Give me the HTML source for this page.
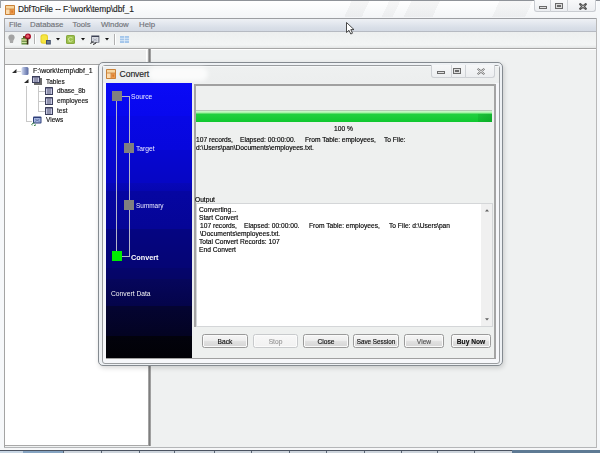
<!DOCTYPE html>
<html><head><meta charset="utf-8"><style>
html,body{margin:0;padding:0;width:600px;height:453px;overflow:hidden;background:#eef0f0;}
body{position:relative;font-family:"Liberation Sans",sans-serif;}
body>div,body>svg{position:absolute;}
.t{white-space:pre;-webkit-text-stroke:0.15px currentColor;}
</style></head><body>
<div style="left:0px;top:0px;width:600px;height:453px;background:#eff1f1;"></div>
<div style="left:0px;top:0px;width:600px;height:18px;background:linear-gradient(#ffffff,#f3f5f7);"></div>
<div style="left:0px;top:0px;width:4px;height:453px;background:#f6f8fa;"></div>
<div style="left:597px;top:0px;width:3px;height:453px;background:#f6f8fa;"></div>
<div style="left:0px;top:0px;width:600px;height:1px;background:#8e9298;"></div>
<div style="left:0px;top:0px;width:1px;height:8px;background:#9aa0a6;"></div>
<div style="left:345px;top:1px;width:200px;height:16px;background:linear-gradient(115deg,transparent 0,transparent 6px,rgba(0,0,0,0.035) 6px,rgba(0,0,0,0.035) 22px,transparent 22px,transparent 40px,rgba(0,0,0,0.03) 40px,rgba(0,0,0,0.03) 50px,transparent 50px,transparent 60px,rgba(0,0,0,0.035) 60px,rgba(0,0,0,0.035) 86px,transparent 86px,transparent 140px,rgba(0,0,0,0.03) 140px,rgba(0,0,0,0.03) 170px,transparent 170px);"></div>
<svg style="left:4.5px;top:4.5px;width:10px;height:10px" viewBox="0 0 10 10"><rect x="0" y="0" width="10" height="10" rx="0.8" fill="#c9823a"/><rect x="1" y="1" width="8" height="2.6" fill="#f7d6a0"/><rect x="1" y="4.4" width="3.6" height="4.6" fill="#fcdcae"/><rect x="5.4" y="4.4" width="3.6" height="4.6" fill="#ef9c4c"/><rect x="6.3" y="5.5" width="1.8" height="2.2" fill="#d87a2c"/></svg>
<div class="t" style="left:18px;top:4.43px;font-size:8.4px;line-height:10.92px;color:#1e1e1e;font-weight:normal;letter-spacing:-0.05px;-webkit-text-stroke:0.15px #1e1e1e;">DbfToFile -- F:\work\temp\dbf_1</div>
<div style="left:534px;top:0;width:62px;height:12px;border:1px solid #c9ccd1;border-top:none;border-radius:0 0 3px 3px;background:linear-gradient(#f8f9fa,#eceef1);box-sizing:border-box"></div>
<div style="left:550px;top:0px;width:1px;height:12px;background:#cfd2d6;"></div>
<div style="left:567px;top:0px;width:1px;height:12px;background:#cfd2d6;"></div>
<div style="left:539px;top:6px;width:8px;height:3px;border:1px solid #6a6a6a;box-sizing:border-box;background:#e0e0e0;"></div>
<div style="left:555px;top:3px;width:8px;height:6px;border:1px solid #6a6a6a;box-sizing:border-box;background:#ddd;"></div>
<div style="left:557px;top:5px;width:4px;height:2px;border:1px solid #6a6a6a;box-sizing:border-box;"></div>
<svg style="left:578.5px;top:3px;width:8px;height:7px" viewBox="0 0 8 7"><path d="M0.5 1.2 L1.3 0.5 L4 2.6 L6.7 0.5 L7.5 1.2 L5.3 3.5 L7.5 5.8 L6.7 6.5 L4 4.4 L1.3 6.5 L0.5 5.8 L2.7 3.5 Z" fill="#f4f4f4" stroke="#555" stroke-width="1.1"/></svg>
<div style="left:4px;top:18px;width:593px;height:14px;background:linear-gradient(#eef1f5 0,#e4e8ef 35%,#d8dee7 75%,#d4dae4 100%);border-top:1px solid #9c9ea2;border-bottom:1px solid #b6bac2;box-sizing:border-box;"></div>
<div class="t" style="left:9px;top:19.83px;font-size:7.8px;line-height:10.14px;color:#707378;font-weight:normal;">File</div>
<div class="t" style="left:30px;top:19.83px;font-size:7.8px;line-height:10.14px;color:#707378;font-weight:normal;">Database</div>
<div class="t" style="left:72.5px;top:19.83px;font-size:7.8px;line-height:10.14px;color:#707378;font-weight:normal;">Tools</div>
<div class="t" style="left:101px;top:19.83px;font-size:7.8px;line-height:10.14px;color:#707378;font-weight:normal;">Window</div>
<div class="t" style="left:139px;top:19.83px;font-size:7.8px;line-height:10.14px;color:#707378;font-weight:normal;">Help</div>
<div style="left:4px;top:32px;width:593px;height:17px;background:linear-gradient(#edefef,#f3f5f5 80%,#e4e6e6);border-bottom:1px solid #a6a6a6;box-sizing:border-box;"></div>
<div style="left:4px;top:49px;width:593px;height:1px;background:#ffffff;"></div>
<div style="left:4px;top:18px;width:1px;height:32px;background:#a8a8a8;"></div>
<svg style="left:8px;top:34px;width:7px;height:9px" viewBox="0 0 7 9"><circle cx="3.5" cy="3.5" r="3.1" fill="#a2a2a2"/><path d="M1.5 5.5 H5.5 L5 9 H2Z" fill="#a8a8a8"/></svg>
<svg style="left:21px;top:33px;width:11px;height:12px" viewBox="0 0 11 12"><rect x="0.5" y="5" width="6" height="6.5" fill="#5f8a3a"/><rect x="0.5" y="6.3" width="6" height="1.3" fill="#e8e2a0"/><rect x="0.5" y="8.8" width="6" height="1.3" fill="#cfe0a0"/><rect x="2" y="3" width="3" height="2" fill="#6a4a20"/><circle cx="7" cy="3.5" r="3" fill="#a8102a"/><circle cx="6.8" cy="3.2" r="1.6" fill="#e85a6a"/><rect x="5.8" y="5.5" width="1.6" height="6" fill="#3a2a10"/></svg>
<div style="left:34px;top:34px;width:1px;height:10px;background:#b0b0b0;"></div>
<div style="left:35px;top:34px;width:1px;height:10px;background:#ffffff;"></div>
<svg style="left:40px;top:34px;width:11px;height:11px" viewBox="0 0 11 11"><rect x="0.5" y="0.3" width="7.5" height="9.5" rx="2.5" fill="#e6cf2a"/><rect x="1.5" y="1.3" width="5.5" height="7.5" rx="2" fill="#f6e640"/><rect x="6" y="6" width="4.8" height="4.5" fill="#3e4c66"/><rect x="7" y="7" width="2.8" height="2.5" fill="#6d7c96"/></svg>
<svg style="left:56px;top:37.5px;width:4px;height:3px" viewBox="0 0 4 3"><path d="M0 0H4L2 2.5Z" fill="#111"/></svg>
<svg style="left:66px;top:35px;width:9px;height:9px" viewBox="0 0 9 9"><rect x="0" y="0" width="9" height="9" rx="1.5" fill="#86a83c"/><rect x="1" y="1" width="7" height="7" rx="1" fill="#9cc04e"/><path d="M6.5 3 Q4.5 1.5 2.5 3.5 Q2 5.5 4 6 M2.5 6 Q4.5 7.5 6.5 5.5" stroke="#d8eca0" stroke-width="0.9" fill="none"/></svg>
<svg style="left:81px;top:37.5px;width:4px;height:3px" viewBox="0 0 4 3"><path d="M0 0H4L2 2.5Z" fill="#111"/></svg>
<svg style="left:90px;top:35px;width:10px;height:10px" viewBox="0 0 10 10"><rect x="1.3" y="0.5" width="8" height="7" fill="#3c4254"/><rect x="2" y="2" width="6.6" height="5" fill="#d6d9e0"/><path d="M3 3.5 L7 6 M7 3.5 L3 6" stroke="#9aa0b0" stroke-width="0.6"/><path d="M1 8.8 Q0.3 7.8 1.5 7.2 L3.5 6.8 M3 9.4 L5.5 8.5 Q6.5 8 5.8 7.2" stroke="#1a1a1a" stroke-width="1" fill="none"/></svg>
<svg style="left:105px;top:37.5px;width:4px;height:3px" viewBox="0 0 4 3"><path d="M0 0H4L2 2.5Z" fill="#111"/></svg>
<div style="left:114px;top:34px;width:1px;height:11px;background:#b0b0b0;"></div>
<div style="left:115px;top:34px;width:1px;height:11px;background:#ffffff;"></div>
<svg style="left:120px;top:36px;width:9px;height:7px" viewBox="0 0 9 7"><rect x="0" y="0" width="9" height="7" fill="#a4c6ea"/><path d="M0 2.3H9M0 4.6H9M4.5 0V7" stroke="#e6f0fa" stroke-width="0.7"/></svg>
<div style="left:5px;top:50px;width:143px;height:14px;background:#eeefef;"></div>
<div style="left:5px;top:64px;width:143px;height:1px;background:#a4a4a4;"></div>
<div style="left:146px;top:50px;width:1px;height:14px;background:#ffffff;"></div>
<div style="left:5px;top:65px;width:143px;height:380px;background:#ffffff;"></div>
<div style="left:4px;top:50px;width:1px;height:398px;background:#a4a4a4;"></div>
<div style="left:5px;top:445px;width:145px;height:1px;background:#a8a8a8;"></div>
<div style="left:148px;top:49px;width:3px;height:397px;background:linear-gradient(90deg,#b8b8b8,#7e7e7e,#b0b0b0);"></div>
<div style="left:4px;top:447px;width:593px;height:1px;background:#b4b6b8;"></div>
<div style="left:0px;top:448px;width:600px;height:2px;background:#f6f7f8;"></div>
<div style="left:0px;top:450px;width:600px;height:1px;background:#4a5260;"></div>
<div style="left:0px;top:451px;width:23px;height:2px;background:#c8d6e4;"></div>
<div style="left:23px;top:451px;width:40px;height:2px;background:#86a4c2;"></div>
<div style="left:63px;top:451px;width:38px;height:2px;background:#cdd4dc;border-left:1px solid #5a6676;box-sizing:border-box;"></div>
<div style="left:101px;top:451px;width:38px;height:2px;background:#cdd4dc;border-left:1px solid #5a6676;box-sizing:border-box;"></div>
<div style="left:139px;top:451px;width:35px;height:2px;background:#cdd4dc;border-left:1px solid #5a6676;box-sizing:border-box;"></div>
<div style="left:174px;top:451px;width:40px;height:2px;background:#cdd4dc;border-left:1px solid #5a6676;box-sizing:border-box;"></div>
<div style="left:214px;top:451px;width:37px;height:2px;background:#cdd4dc;border-left:1px solid #5a6676;box-sizing:border-box;"></div>
<div style="left:251px;top:451px;width:38px;height:2px;background:#cdd4dc;border-left:1px solid #5a6676;box-sizing:border-box;"></div>
<div style="left:289px;top:451px;width:37px;height:2px;background:#cdd4dc;border-left:1px solid #5a6676;box-sizing:border-box;"></div>
<div style="left:326px;top:451px;width:38px;height:2px;background:#cdd4dc;border-left:1px solid #5a6676;box-sizing:border-box;"></div>
<div style="left:364px;top:451px;width:37px;height:2px;background:#cdd4dc;border-left:1px solid #5a6676;box-sizing:border-box;"></div>
<div style="left:401px;top:451px;width:36px;height:2px;background:#cdd4dc;border-left:1px solid #5a6676;box-sizing:border-box;"></div>
<div style="left:437px;top:451px;width:37px;height:2px;background:#cdd4dc;border-left:1px solid #5a6676;box-sizing:border-box;"></div>
<div style="left:474px;top:451px;width:38px;height:2px;background:#cdd4dc;border-left:1px solid #5a6676;box-sizing:border-box;"></div>
<div style="left:512px;top:450px;width:88px;height:3px;background:#5e7a94;"></div>
<div style="left:596px;top:18px;width:1px;height:430px;background:#b8b8b8;"></div>
<div style="left:25.5px;top:86px;width:1px;height:35px;background:#c8c8c8;"></div>
<div style="left:26px;top:120.5px;width:6px;height:1px;background:#c8c8c8;"></div>
<div style="left:37.5px;top:86px;width:1px;height:25px;background:#c8c8c8;"></div>
<div style="left:38px;top:91px;width:6.5px;height:1px;background:#c8c8c8;"></div>
<div style="left:38px;top:101px;width:6.5px;height:1px;background:#c8c8c8;"></div>
<div style="left:38px;top:110.5px;width:6.5px;height:1px;background:#c8c8c8;"></div>
<div style="left:16.5px;top:71px;width:4.5px;height:1px;background:#c8c8c8;"></div>
<svg style="left:11.5px;top:69px;width:5px;height:4px" viewBox="0 0 5 4"><path d="M4.5 0V4H0Z" fill="#2a2a2a"/></svg>
<svg style="left:23.5px;top:78.5px;width:5px;height:4px" viewBox="0 0 5 4"><path d="M4.5 0V4H0Z" fill="#2a2a2a"/></svg>
<svg style="left:21px;top:67px;width:8px;height:8px" viewBox="0 0 8 8"><defs><linearGradient id="dbg" x1="0" x2="1"><stop offset="0" stop-color="#d4dcf0"/><stop offset="0.5" stop-color="#8e9cc8"/><stop offset="1" stop-color="#5a6aa0"/></linearGradient></defs><rect x="0.5" y="0" width="7" height="8" rx="1.5" fill="url(#dbg)"/></svg>
<div class="t" style="left:32.8px;top:66.13px;font-size:7.2px;line-height:9.36px;color:#111;font-weight:normal;transform:scaleX(0.97);transform-origin:0 0;">F:\work\temp\dbf_1</div>
<svg style="left:31.5px;top:76px;width:10px;height:9px" viewBox="0 0 10 9"><rect x="2" y="2" width="8" height="7" fill="#6a6a6a"/><rect x="0" y="0" width="8" height="7" fill="#3c3f5c"/><rect x="1" y="1.5" width="6" height="4.5" fill="#c8cae4"/><path d="M3 1.5V6M5 1.5V6" stroke="#3c3f5c" stroke-width="0.8"/></svg>
<div class="t" style="left:45.8px;top:76.63px;font-size:7.2px;line-height:9.36px;color:#111;font-weight:normal;transform:scaleX(0.9);transform-origin:0 0;">Tables</div>
<svg style="left:45px;top:87px;width:8px;height:8px" viewBox="0 0 8 8"><rect x="0" y="0" width="8" height="8" rx="0.5" fill="#3c3f5c"/><rect x="1" y="1.5" width="6" height="5.5" fill="#c8cae4"/><path d="M3 1.5V7M5 1.5V7" stroke="#3c3f5c" stroke-width="0.8"/></svg>
<div class="t" style="left:56.7px;top:86.13px;font-size:7.2px;line-height:9.36px;color:#111;font-weight:normal;transform:scaleX(0.9);transform-origin:0 0;">dbase_8b</div>
<svg style="left:45px;top:97px;width:8px;height:8px" viewBox="0 0 8 8"><rect x="0" y="0" width="8" height="8" rx="0.5" fill="#3c3f5c"/><rect x="1" y="1.5" width="6" height="5.5" fill="#c8cae4"/><path d="M3 1.5V7M5 1.5V7" stroke="#3c3f5c" stroke-width="0.8"/></svg>
<div class="t" style="left:56.7px;top:96.13px;font-size:7.2px;line-height:9.36px;color:#111;font-weight:normal;transform:scaleX(0.9);transform-origin:0 0;">employees</div>
<svg style="left:45px;top:107px;width:8px;height:8px" viewBox="0 0 8 8"><rect x="0" y="0" width="8" height="8" rx="0.5" fill="#3c3f5c"/><rect x="1" y="1.5" width="6" height="5.5" fill="#c8cae4"/><path d="M3 1.5V7M5 1.5V7" stroke="#3c3f5c" stroke-width="0.8"/></svg>
<div class="t" style="left:56.7px;top:106.13px;font-size:7.2px;line-height:9.36px;color:#111;font-weight:normal;transform:scaleX(0.9);transform-origin:0 0;">test</div>
<svg style="left:31px;top:115.5px;width:11px;height:10px" viewBox="0 0 11 10"><rect x="2" y="0.5" width="8.5" height="7" rx="1" fill="#2e3e7a"/><rect x="3" y="2" width="6.5" height="4.5" fill="#a6b6de"/><path d="M4 3 L8.5 5.5 M8.5 3 L4 5.5" stroke="#5a6aa0" stroke-width="0.7"/><path d="M1.2 9.3 Q0.3 8.2 1.6 7.4 L3.4 6.8 M3 9.6 L5 8.8" stroke="#2a7a3a" stroke-width="1" fill="none"/></svg>
<div class="t" style="left:45.8px;top:115.33px;font-size:7.2px;line-height:9.36px;color:#111;font-weight:normal;transform:scaleX(0.9);transform-origin:0 0;">Views</div>
<svg style="left:346px;top:22px;width:9px;height:13px" viewBox="0 0 9 13"><path d="M0.5 0.5 L0.5 10.5 L3 8.3 L4.8 12 L6.5 11.2 L4.8 7.6 L8 7.6 Z" fill="#fff" stroke="#2a2a2a" stroke-width="0.85"/></svg>
<div style="left:98px;top:61.5px;width:405px;height:304.5px;border:1px solid #848a90;border-radius:5px;box-sizing:border-box;background:#eef1f4;box-shadow:1px 2px 5px rgba(0,0,0,0.16);"></div>
<div style="left:101.5px;top:64.5px;width:398px;height:299px;border:1px solid #9a9da0;border-radius:3px;box-sizing:border-box;background:#f6f7fa;"></div>
<div style="left:102.5px;top:65.5px;width:396px;height:17.5px;background:linear-gradient(#fafbfc 0,#eef0f0 1.5px,#eceeee 100%);"></div>
<div style="left:148px;top:67px;width:60px;height:14px;border-radius:7px;background:rgba(255,255,255,0.75);filter:blur(2px);"></div>
<svg style="left:106px;top:69px;width:10px;height:10px" viewBox="0 0 10 10"><rect x="0" y="0" width="10" height="10" rx="0.8" fill="#c9823a"/><rect x="1" y="1" width="8" height="2.6" fill="#f7d6a0"/><rect x="1" y="4.4" width="3.6" height="4.6" fill="#fcdcae"/><rect x="5.4" y="4.4" width="3.6" height="4.6" fill="#ef9c4c"/><rect x="6.3" y="5.5" width="1.8" height="2.2" fill="#d87a2c"/></svg>
<div class="t" style="left:119.6px;top:68.63px;font-size:8.6px;line-height:11.18px;color:#1e1e1e;font-weight:normal;letter-spacing:-0.1px;">Convert</div>
<div style="left:431px;top:65px;width:64px;height:13px;border:1px solid #cdd0d4;border-top:none;border-radius:0 0 3px 3px;background:linear-gradient(#f6f7f8,#eceef0);box-sizing:border-box"></div>
<div style="left:450.5px;top:65px;width:1px;height:13px;background:#d0d3d7;"></div>
<div style="left:465px;top:65px;width:1px;height:13px;background:#d0d3d7;"></div>
<div style="left:437px;top:71px;width:8px;height:3px;border:1px solid #6a6a6a;box-sizing:border-box;background:#e0e0e0;"></div>
<div style="left:453px;top:68px;width:8px;height:6px;border:1px solid #6a6a6a;box-sizing:border-box;background:#ddd;"></div>
<div style="left:455px;top:70px;width:4px;height:2px;border:1px solid #6a6a6a;box-sizing:border-box;"></div>
<svg style="left:477px;top:67.7px;width:8px;height:7px" viewBox="0 0 8 7"><path d="M0.5 1.2 L1.3 0.5 L4 2.6 L6.7 0.5 L7.5 1.2 L5.3 3.5 L7.5 5.8 L6.7 6.5 L4 4.4 L1.3 6.5 L0.5 5.8 L2.7 3.5 Z" fill="#f4f4f4" stroke="#6a6a6a" stroke-width="0.9"/></svg>
<div style="left:106px;top:83px;width:389px;height:275px;background:#eef0ef;"></div>
<div style="left:106px;top:83px;width:86px;height:275px;background:linear-gradient(#0a0af6 0px, #0808ee 33px,#0808e6 33px, #0707dc 67px,#0606d2 67px, #0606c4 100px,#0707b8 100px, #0606b0 108px,#0606a2 108px, #050596 146px,#050582 146px, #050574 185px,#05056c 185px, #050566 196px,#06065c 196px, #04044a 223px,#040432 223px, #030322 253px,#02020c 253px, #010106 275px);"></div>
<div style="left:116px;top:101px;width:1px;height:150px;background:#b4b4c8;"></div>
<div style="left:129px;top:96px;width:1px;height:161px;background:#b4b4c8;"></div>
<div style="left:121.5px;top:96px;width:8px;height:1px;background:#b4b4c8;"></div>
<div style="left:121.5px;top:256px;width:8px;height:1px;background:#b4b4c8;"></div>
<div style="left:112px;top:91px;width:10px;height:10px;background:#808080;"></div>
<div style="left:124px;top:142.5px;width:10px;height:10px;background:#808080;"></div>
<div style="left:124px;top:200px;width:10px;height:10px;background:#808080;"></div>
<div style="left:112px;top:251px;width:10px;height:10px;background:#00ee00;"></div>
<div class="t" style="left:130.5px;top:92.22px;font-size:7px;line-height:9.1px;color:#ececff;font-weight:normal;transform:scaleX(0.96);transform-origin:0 0;-webkit-text-stroke:0;">Source</div>
<div class="t" style="left:136px;top:143.62px;font-size:7px;line-height:9.1px;color:#ececff;font-weight:normal;transform:scaleX(0.96);transform-origin:0 0;-webkit-text-stroke:0;">Target</div>
<div class="t" style="left:135.8px;top:201.02px;font-size:7px;line-height:9.1px;color:#ececff;font-weight:normal;transform:scaleX(0.92);transform-origin:0 0;-webkit-text-stroke:0;">Summary</div>
<div class="t" style="left:131.4px;top:252.72px;font-size:7px;line-height:9.1px;color:#ffffff;font-weight:bold;transform:scaleX(1.04);transform-origin:0 0;-webkit-text-stroke:0;">Convert</div>
<div class="t" style="left:111px;top:288.82px;font-size:7px;line-height:9.1px;color:#f4f4f4;font-weight:normal;transform:scaleX(0.96);transform-origin:0 0;-webkit-text-stroke:0;">Convert Data</div>
<div style="left:194px;top:84px;width:1.6px;height:243px;background:#a4a4a4;"></div>
<div style="left:194px;top:84px;width:301px;height:1.5px;background:#a0a0a0;"></div>
<div style="left:494px;top:84px;width:2px;height:274px;background:#a4a4a4;"></div>
<div style="left:106px;top:358px;width:390px;height:1px;background:#a0a0a0;"></div>
<div style="left:196px;top:110px;width:296px;height:12px;background:linear-gradient(#b4c8b4 0,#b4c8b4 1px,#d2f8d2 1px,#9cf09c 3px,#22d040 4px,#0fc82f 100%);"></div>
<div style="left:478px;top:114px;width:14px;height:8px;background:linear-gradient(90deg,rgba(0,110,20,0.15),rgba(0,110,20,0.3));"></div>
<div class="t" style="left:334.4px;top:124.02px;font-size:7px;line-height:9.1px;color:#000;font-weight:normal;transform:scaleX(0.95);transform-origin:0 0;">100 %</div>
<div class="t" style="left:196px;top:135.02px;font-size:7px;line-height:9.1px;color:#000;font-weight:normal;transform:scaleX(0.95);transform-origin:0 0;">107 records,</div>
<div class="t" style="left:240px;top:135.02px;font-size:7px;line-height:9.1px;color:#000;font-weight:normal;transform:scaleX(0.95);transform-origin:0 0;">Elapsed: 00:00:00.</div>
<div class="t" style="left:305px;top:135.02px;font-size:7px;line-height:9.1px;color:#000;font-weight:normal;transform:scaleX(0.95);transform-origin:0 0;">From Table: employees,</div>
<div class="t" style="left:384px;top:135.02px;font-size:7px;line-height:9.1px;color:#000;font-weight:normal;transform:scaleX(0.95);transform-origin:0 0;">To File:</div>
<div class="t" style="left:196px;top:143.02px;font-size:7px;line-height:9.1px;color:#000;font-weight:normal;transform:scaleX(0.95);transform-origin:0 0;">d:\Users\pan\Documents\employees.txt.</div>
<div class="t" style="left:195px;top:195.02px;font-size:7px;line-height:9.1px;color:#000;font-weight:normal;transform:scaleX(0.95);transform-origin:0 0;">Output</div>
<div style="left:196px;top:202.5px;width:297px;height:124.5px;background:#ffffff;border:1px solid #d4d6d8;box-sizing:border-box;"></div>
<div style="left:481px;top:204px;width:11px;height:122px;background:#f0f0f0;"></div>
<svg style="left:485px;top:209px;width:4px;height:3px" viewBox="0 0 4 3"><path d="M0 2.5H4L2 0.3Z" fill="#606060"/></svg>
<svg style="left:485px;top:317.5px;width:4px;height:3px" viewBox="0 0 4 3"><path d="M0 0.3H4L2 2.5Z" fill="#606060"/></svg>
<div class="t" style="left:199px;top:205.02px;font-size:7px;line-height:9.1px;color:#000;font-weight:normal;transform:scaleX(0.95);transform-origin:0 0;">Converting...</div>
<div class="t" style="left:199px;top:213.02px;font-size:7px;line-height:9.1px;color:#000;font-weight:normal;transform:scaleX(0.95);transform-origin:0 0;">Start Convert</div>
<div class="t" style="left:200px;top:221.02px;font-size:7px;line-height:9.1px;color:#000;font-weight:normal;transform:scaleX(0.95);transform-origin:0 0;">107 records,</div>
<div class="t" style="left:244px;top:221.02px;font-size:7px;line-height:9.1px;color:#000;font-weight:normal;transform:scaleX(0.95);transform-origin:0 0;">Elapsed: 00:00:00.</div>
<div class="t" style="left:309px;top:221.02px;font-size:7px;line-height:9.1px;color:#000;font-weight:normal;transform:scaleX(0.95);transform-origin:0 0;">From Table: employees,</div>
<div class="t" style="left:388.5px;top:221.02px;font-size:7px;line-height:9.1px;color:#000;font-weight:normal;transform:scaleX(0.95);transform-origin:0 0;">To File: d:\Users\pan</div>
<div class="t" style="left:200px;top:229.02px;font-size:7px;line-height:9.1px;color:#000;font-weight:normal;transform:scaleX(0.95);transform-origin:0 0;">\Documents\employees.txt.</div>
<div class="t" style="left:199px;top:237.02px;font-size:7px;line-height:9.1px;color:#000;font-weight:normal;transform:scaleX(0.95);transform-origin:0 0;">Total Convert Records: 107</div>
<div class="t" style="left:199px;top:245.02px;font-size:7px;line-height:9.1px;color:#000;font-weight:normal;transform:scaleX(0.95);transform-origin:0 0;">End Convert</div>
<div style="left:202px;top:334px;width:46px;height:14px;background:linear-gradient(#f6f6f6 0,#eeeeee 45%,#e0e0e0 55%,#d6d6d6 100%);border:1px solid #9a9a9a;box-shadow:inset 0 0 0 1px #fafafa;border-radius:2.5px;box-sizing:border-box;"></div>
<div class="t" style="left:202px;top:336.65000000000003px;width:46px;text-align:center;font-size:7px;line-height:9px;color:#111;font-weight:normal;transform:scaleX(0.95);transform-origin:50% 0">Back</div>
<div style="left:253px;top:334px;width:45px;height:14px;background:linear-gradient(#f8f8f8,#f1f1f1);border:1px solid #c8cacc;box-shadow:inset 0 0 0 1px #fbfbfb;border-radius:2.5px;box-sizing:border-box;"></div>
<div class="t" style="left:253px;top:336.65000000000003px;width:45px;text-align:center;font-size:7px;line-height:9px;color:#9a9a9a;font-weight:normal;transform:scaleX(0.95);transform-origin:50% 0">Stop</div>
<div style="left:303px;top:334px;width:46px;height:14px;background:linear-gradient(#f6f6f6 0,#eeeeee 45%,#e0e0e0 55%,#d6d6d6 100%);border:1px solid #9a9a9a;box-shadow:inset 0 0 0 1px #fafafa;border-radius:2.5px;box-sizing:border-box;"></div>
<div class="t" style="left:303px;top:336.65000000000003px;width:46px;text-align:center;font-size:7px;line-height:9px;color:#111;font-weight:normal;transform:scaleX(0.95);transform-origin:50% 0">Close</div>
<div style="left:353px;top:334px;width:46px;height:14px;background:linear-gradient(#f6f6f6 0,#eeeeee 45%,#e0e0e0 55%,#d6d6d6 100%);border:1px solid #9a9a9a;box-shadow:inset 0 0 0 1px #fafafa;border-radius:2.5px;box-sizing:border-box;"></div>
<div class="t" style="left:353px;top:336.65000000000003px;width:46px;text-align:center;font-size:7px;line-height:9px;color:#111;font-weight:normal;transform:scaleX(0.9);transform-origin:50% 0">Save Session</div>
<div style="left:404px;top:334px;width:40px;height:14px;background:linear-gradient(#f6f6f6 0,#eeeeee 45%,#e0e0e0 55%,#d6d6d6 100%);border:1px solid #9a9a9a;box-shadow:inset 0 0 0 1px #fafafa;border-radius:2.5px;box-sizing:border-box;"></div>
<div class="t" style="left:404px;top:336.65000000000003px;width:40px;text-align:center;font-size:7px;line-height:9px;color:#555;font-weight:normal;transform:scaleX(0.95);transform-origin:50% 0">View</div>
<div style="left:451px;top:334px;width:40px;height:14px;background:linear-gradient(#f6f6f6 0,#eeeeee 45%,#e0e0e0 55%,#d6d6d6 100%);border:1px solid #9a9a9a;box-shadow:inset 0 0 0 1px #fafafa;border-radius:2.5px;box-sizing:border-box;"></div>
<div class="t" style="left:451px;top:336.65000000000003px;width:40px;text-align:center;font-size:7px;line-height:9px;color:#111;font-weight:bold;transform:scaleX(0.95);transform-origin:50% 0">Buy Now</div>
</body></html>
